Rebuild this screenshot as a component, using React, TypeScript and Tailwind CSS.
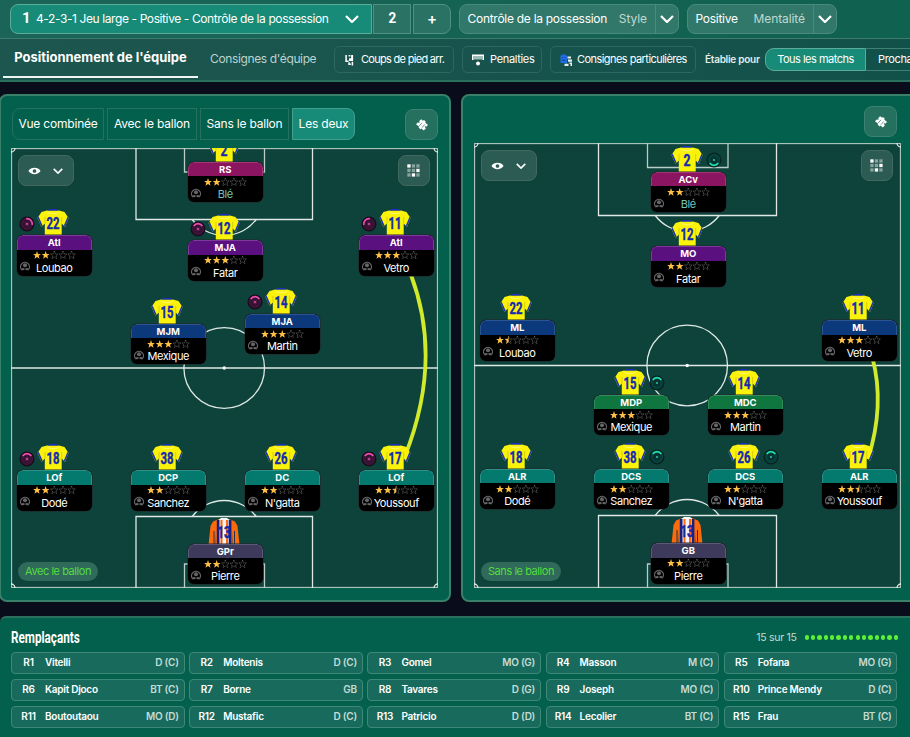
import clsx from "clsx";

type Radar = { side: "left" | "right"; tone: "pink" | "teal"; angle: number };

type Player = {
  x: number;
  y: number;
  num: number;
  role: string;
  name: string;
  stars: number;
  tone: keyof typeof tones;
  radar?: Radar;
  keeper?: boolean;
  highlight?: boolean;
};

const tones = {
  pink: "bg-[#8b1560] border-[#a13677]",
  purple: "bg-[#5b1080] border-[#7d3a9c]",
  blue: "bg-[#0c397c] border-[#2c5492]",
  teal: "bg-[#04796d] border-[#2c9287]",
  green: "bg-[#0f763f] border-[#338d5d]",
  slate: "bg-[#3e3a5b] border-[#5c5877]",
};

const pinkUp: Radar = { side: "left", tone: "pink", angle: 0 };
const tealUp: Radar = { side: "right", tone: "teal", angle: 0 };

// x / y : coin haut gauche de la carte, dans le repère du terrain
const withBall: Player[] = [
  { x: 177, y: 13.5, num: 2, role: "RS", name: "Blé", stars: 2, tone: "pink", highlight: true },
  { x: 6, y: 87, num: 22, role: "Atl", name: "Loubao", stars: 2, tone: "purple", radar: { ...pinkUp, angle: 45 } },
  { x: 177, y: 92, num: 12, role: "MJA", name: "Fatar", stars: 3, tone: "purple", radar: pinkUp },
  { x: 348, y: 87, num: 11, role: "Atl", name: "Vetro", stars: 3, tone: "purple", radar: { ...pinkUp, angle: -45 } },
  { x: 120, y: 175.5, num: 15, role: "MJM", name: "Mexique", stars: 3, tone: "blue" },
  { x: 234, y: 165.5, num: 14, role: "MJA", name: "Martin", stars: 3, tone: "blue", radar: pinkUp },
  { x: 6, y: 322, num: 18, role: "LOf", name: "Dodé", stars: 2, tone: "teal", radar: pinkUp },
  { x: 120, y: 322, num: 38, role: "DCP", name: "Sanchez", stars: 2, tone: "teal" },
  { x: 234, y: 322, num: 26, role: "DC", name: "N'gatta", stars: 2, tone: "teal" },
  { x: 348, y: 322, num: 17, role: "LOf", name: "Youssouf", stars: 2.5, tone: "teal", radar: pinkUp },
  { x: 177, y: 395.5, num: 13, role: "GPr", name: "Pierre", stars: 2, tone: "slate", keeper: true },
];

const withoutBall: Player[] = [
  { x: 177, y: 28.5, num: 2, role: "ACv", name: "Blé", stars: 2, tone: "pink", highlight: true, radar: { ...tealUp, angle: 180 } },
  { x: 177, y: 103, num: 12, role: "MO", name: "Fatar", stars: 2, tone: "purple" },
  { x: 6, y: 177, num: 22, role: "ML", name: "Loubao", stars: 1.5, tone: "blue" },
  { x: 348, y: 177, num: 11, role: "ML", name: "Vetro", stars: 3, tone: "blue" },
  { x: 120, y: 251.5, num: 15, role: "MDP", name: "Mexique", stars: 3, tone: "green", radar: tealUp },
  { x: 234, y: 251.5, num: 14, role: "MDC", name: "Martin", stars: 3, tone: "green" },
  { x: 6, y: 325.5, num: 18, role: "ALR", name: "Dodé", stars: 2, tone: "teal" },
  { x: 120, y: 325.5, num: 38, role: "DCS", name: "Sanchez", stars: 2, tone: "teal", radar: tealUp },
  { x: 234, y: 325.5, num: 26, role: "DCS", name: "N'gatta", stars: 2, tone: "teal", radar: tealUp },
  { x: 348, y: 325.5, num: 17, role: "ALR", name: "Youssouf", stars: 2.5, tone: "teal" },
  { x: 177, y: 400, num: 13, role: "GB", name: "Pierre", stars: 2, tone: "slate", keeper: true },
];

const subs: [string, string][] = [
  ["Vitelli", "D (C)"],
  ["Moltenis", "D (C)"],
  ["Gomel", "MO (G)"],
  ["Masson", "M (C)"],
  ["Fofana", "MO (G)"],
  ["Kapit Djoco", "BT (C)"],
  ["Borne", "GB"],
  ["Tavares", "D (G)"],
  ["Joseph", "MO (C)"],
  ["Prince Mendy", "D (C)"],
  ["Boutoutaou", "MO (D)"],
  ["Mustafic", "D (C)"],
  ["Patricio", "D (D)"],
  ["Lecolier", "BT (C)"],
  ["Frau", "BT (C)"],
];

function Chevron({ className }: { className?: string }) {
  return (
    <svg viewBox="0 0 14 8" className={className} fill="none" stroke="white" aria-hidden>
      <path d="M1 1l6 6 6-6" strokeWidth="2.2" />
    </svg>
  );
}

function Shirt({ num, keeper }: { num: number; keeper?: boolean }) {
  return (
    <svg viewBox="0 0 32 28" className="block h-7 w-8" aria-hidden>
      {keeper ? (
        <>
          <path d="M11 2 5 4.500 2.500 9 0.500 28H7.500L8 15V28H24.500V15L25 28H31.500L29.500 9 27 4.500 21 2Z" fill="#fb6a0b" />
          <path d="M11 2h10v26H11z" fill="#f4f2f6" />
          <path d="M8.800 3h2.700v25H8.800zM20.700 3h2.700v25h-2.700z" fill="#1b1f7c" />
          <path d="M12.500 3h2v25h-2zM18 3h2v25h-2z" fill="#fb6a0b" />
          <path d="M6 14v14M26.500 14v14" stroke="#26304a" strokeWidth="1" />
          <path d="M12 1h8l-1.500 2h-5z" fill="#fff" />
        </>
      ) : (
        <>
          <path d="M10 2.500 4.500 4 0.500 10 4.500 19 7.800 15.500V28H24.700V15.500L28 19 31.500 10 27.500 4 22 2.500Z" fill="#fbf20c" />
          <path d="M0.500 10 4.500 19 5.700 17.700 1.600 8.500ZM31.500 10 28 19 26.800 17.700 30.600 8.500Z" fill="#1b35a8" />
          <path d="M12 1h8l1.500 1.500H10.500z" fill="#1b2fc0" />
          <path d="M8 15.500V9M24.700 15.500V9" stroke="#cfc400" strokeWidth="0.800" />
          <path d="M10.500 4.500C13 6 19 6 21.500 4.500" fill="none" stroke="#fdf98a" strokeWidth="0.800" />
        </>
      )}
      <text
        x="16"
        y="21"
        textAnchor="middle"
        textLength={num > 9 ? 13 : 7}
        lengthAdjust="spacingAndGlyphs"
        fontFamily="Roboto, sans-serif"
        fontSize="16"
        fontWeight="700"
        fill="#1429b0"
        stroke="#1429b0"
        strokeWidth="0.400"
      >
        {num}
      </text>
    </svg>
  );
}

function Stars({ value }: { value: number }) {
  const star = "M4 0.100 5 2.900 7.900 3 5.700 4.800 6.500 7.700 4 6 1.500 7.700 2.300 4.800 0.100 3 3 2.900Z";
  const half = "M4 0.100V6L1.500 7.700 2.300 4.800 0.100 3 3 2.900Z";
  return (
    <svg viewBox="0 0 43 8" className="h-2 w-[43px]" aria-hidden>
      {[0, 1, 2, 3, 4].map((i) => (
        <g key={i} transform={`translate(${i * 8.65} 0)`}>
          {value >= i + 1 ? (
            <path d={star} fill="#ffc045" />
          ) : (
            <>
              <path d={star} fill="none" stroke="#858585" strokeWidth="0.600" strokeDasharray="1 0.500" />
              {value > i && <path d={half} fill="#ffc045" />}
            </>
          )}
        </g>
      ))}
    </svg>
  );
}

function RadarIcon({ radar }: { radar: Radar }) {
  const pink = radar.tone === "pink";
  return (
    <svg
      viewBox="0 0 16 16"
      className={clsx("absolute -top-[19.500px] size-4", radar.side === "left" ? "left-[2px]" : "left-[55px]")}
      aria-hidden
    >
      <circle cx="8" cy="8" r="6.900" fill={pink ? "#3b1436" : "#07403c"} stroke={pink ? "#180c1c" : "#06231f"} strokeWidth="1.300" />
      <circle cx="8" cy="8" r="3" fill={pink ? "#4d1a45" : "#0a3634"} stroke={pink ? "#2a0f28" : "#052c2a"} strokeWidth="0.800" />
      <circle cx="8" cy="8" r="0.900" fill={pink ? "#f04fb4" : "#21e0b2"} />
      <path
        d="M3.700 4.900A5.300 5.300 0 0 1 12.300 4.900"
        transform={`rotate(${radar.angle} 8 8)`}
        fill="none"
        stroke={pink ? "#f04fb4" : "#21e0b2"}
        strokeWidth="1.700"
      />
    </svg>
  );
}

function PlayerCard({ p }: { p: Player }) {
  return (
    <div className="absolute w-[74.500px]" style={{ left: p.x, top: p.y }}>
      <div className="absolute -top-[27px] left-[20px]">
        <Shirt num={p.num} keeper={p.keeper} />
      </div>
      {p.radar && <RadarIcon radar={p.radar} />}
      <div className="relative h-[40.500px] overflow-hidden rounded-md bg-black shadow-[0_0_0_0.500px_#24252b]">
        <div
          className={clsx(
            "flex h-[14.500px] items-center justify-center rounded-t-md border border-b-0 text-[9.500px] leading-none font-bold text-white",
            tones[p.tone],
          )}
        >
          {p.role}
        </div>
        <div className="flex justify-center pt-[1.500px]">
          <Stars value={p.stars} />
        </div>
        <div
          className={clsx(
            "pt-[2.500px] text-center text-[11px] leading-[13px] tracking-[-0.420px]",
            p.highlight ? "text-[#74c5bb]" : "text-white",
          )}
        >
          {p.name}
        </div>
        <svg viewBox="0 0 10 10" className="absolute bottom-[4.500px] left-[3px] size-[10px]" aria-hidden>
          <path d="M1.300 8.200A4.400 4.400 0 1 1 8.700 8.200" fill="none" stroke="#66666a" strokeWidth="1.100" />
          <circle cx="5" cy="4.200" r="2" fill="#66666a" />
          <path d="M0.800 9.300C1.300 6.800 3.500 6.500 5 8 6.500 6.500 8.700 6.800 9.200 9.300H6.800L5 8.300 3.200 9.300Z" fill="#66666a" />
        </svg>
      </div>
    </div>
  );
}

type PitchProps = {
  height: number;
  mid: number;
  boxX: [number, number];
  goalX: [number, number];
  boxY: [number, number];
  goalY: [number, number];
  link: string;
};

function PitchLines({ height, mid, boxX, goalX, boxY, goalY, link }: PitchProps) {
  const cx = 213.2;
  return (
    <svg viewBox={`0 0 427 ${height}`} width="427" height={height} fill="none" className="absolute inset-0" aria-hidden>
      <g stroke="#dfe9e6" strokeWidth="1.300">
        <rect x="0.500" y="0.500" width="426" height={height - 1} stroke="#a9c2bb" />
        <path d={`M0 ${mid}H427`} strokeWidth="1.700" />
        <circle cx={cx} cy={mid} r="40.300" />
        <path d={`M${boxX[0]} 0V${boxY[0]}H${boxX[1]}V0`} />
        <path d={`M${boxX[0]} ${height}V${boxY[1]}H${boxX[1]}V${height}`} />
        <path d={`M${goalX[0]} 0V${goalY[0]}H${goalX[1]}V0`} stroke="#b9ccc7" />
        <path d={`M${goalX[0]} ${height}V${goalY[1]}H${goalX[1]}V${height}`} stroke="#b9ccc7" />
        <path d={`M${cx - 32} ${boxY[0]}A40 40 0 0 0 ${cx + 32} ${boxY[0]}`} />
        <path d={`M${cx - 32} ${boxY[1]}A40 40 0 0 1 ${cx + 32} ${boxY[1]}`} />
        <path d={`M0 4A4 4 0 0 0 4 0M423 0A4 4 0 0 0 427 4M0 ${height - 4}A4 4 0 0 1 4 ${height}M423 ${height}A4 4 0 0 1 427 ${height - 4}`} />
      </g>
      <circle cx={cx} cy={mid} r="1.700" fill="#fff" />
      <path d={link} stroke="#d2ea2c" strokeWidth="3.800" />
    </svg>
  );
}

function Pitch({ players, label, ...lines }: PitchProps & { players: Player[]; label: string }) {
  return (
    <div className="relative w-[427px] overflow-hidden bg-[#0e433b]" style={{ height: lines.height }}>
      <PitchLines {...lines} />
      {players.map((p) => (
        <PlayerCard key={p.name} p={p} />
      ))}
      <button className="absolute top-[7px] left-[7px] flex h-[31px] w-[56px] items-center justify-center gap-[12px] rounded-lg border border-[#41695f] bg-[#2c5b53] pr-[2px]">
        <svg viewBox="0 0 14 8" className="h-2 w-[13px]" aria-hidden>
          <path d="M0.500 4C3-0.500 11-0.500 13.500 4 11 8.500 3 8.500 0.500 4Z" fill="#fff" />
          <circle cx="7" cy="4" r="2" fill="#2c5b53" />
        </svg>
        <Chevron className="h-[6px] w-[10px]" />
      </button>
      <button className="absolute top-[7px] right-[8px] flex h-[31px] w-[32px] items-center justify-center rounded-lg border border-[#41695f] bg-[#2c5b53]">
        <svg viewBox="0 0 13 13" className="mr-px size-[13px]" aria-hidden>
          {Array.from({ length: 9 }, (_, i) => (
            <rect
              key={i}
              x={(i % 3) * 4.5 + 0.3}
              y={Math.floor(i / 3) * 4.5 + 0.3}
              width="3.300"
              height="3.300"
              fill={[0, 5, 7].includes(i) ? "#fff" : "#86a39d"}
            />
          ))}
        </svg>
      </button>
      <span className="absolute bottom-[7px] left-[7px] flex h-[19px] w-[80px] items-center justify-center rounded-full bg-[#2f6a5a] text-[11px] tracking-[-0.450px] text-[#54dd40]">
        {label}
      </span>
    </div>
  );
}

function BrushButton() {
  return (
    <button className="flex h-[31px] w-[33px] items-center justify-center rounded-lg border border-[#3b8272] bg-[#25705f]">
      <svg viewBox="0 0 14 14" className="size-[14px]" aria-hidden>
        <path
          d="M6.200 1.200 8 2.800 9 2 10.800 3.700 10.200 4.500 13 7 11.200 8.700 10.500 8 9.700 9 11 10.200 8.800 12.600 6.500 10.600 5.600 11.400 3.600 9.600 4.200 8.800 1 6.300 3 4.200 4 5 4.900 4 4 3.200Z"
          fill="#fff"
        />
        <path d="M4.200 8 7 4.800M7 9.600 9.800 6.400" stroke="#25705f" strokeWidth="0.700" />
      </svg>
    </button>
  );
}

function Select({ value, hint, className }: { value: string; hint: string; className: string }) {
  return (
    <div className={clsx("flex h-[30px] items-center rounded-lg border border-[#4a8a7c] bg-[#32786a] pl-[7.500px] text-[12px] tracking-[-0.280px]", className)}>
      <span className="whitespace-nowrap text-white">{value}</span>
      <span className="mr-[8px] ml-auto tracking-[-0.080px] text-[#c0d8d2]">{hint}</span>
      <span className="flex h-full w-[23px] items-center justify-center border-l border-[#4a8a7c]">
        <Chevron className="h-[8px] w-[14px]" />
      </span>
    </div>
  );
}

const toolButton =
  "flex h-[27px] items-center rounded-[5px] border border-[#2c6860] text-[11px] whitespace-nowrap text-white";
const viewTab = "flex h-8 items-center justify-center border whitespace-nowrap";

export default function App() {
  return (
    <div className="flex h-[737px] w-[910px] flex-col overflow-hidden bg-[#090c1b] font-[Inter,sans-serif] text-white">
      <header className="h-[82px] shrink-0 border-b-2 border-[#2b705d]">
        <div className="flex h-[39px] items-start border-b border-[#3b7c6f] bg-linear-to-r from-[#1b6558] to-[#0f6150] pt-1 pl-[10px]">
          <div className="flex h-[30px] w-[362px] items-center rounded-l-lg border border-[#5cab9b] bg-[#178b77] pl-[11px]">
            <span className="w-[14px] pb-[2px] font-[Roboto] text-[15px] font-bold">1</span>
            <span className="text-[12px] tracking-[-0.400px] whitespace-nowrap">4-2-3-1 Jeu large - Positive - Contrôle de la possession</span>
            <Chevron className="mr-[12px] ml-auto h-[8px] w-[14px]" />
          </div>
          <div className="ml-px flex h-[30px] w-[38px] items-center justify-center border border-[#4f9182] bg-[#2a7364] font-[Roboto] text-[15px] font-bold">
            <span className="scale-x-90 pb-[2px]">2</span>
          </div>
          <div className="ml-[2px] flex h-[30px] w-[38px] items-center justify-center rounded-r-lg border border-[#4f9182] bg-[#2a7364] text-[15px] font-semibold">+</div>
          <Select value="Contrôle de la possession" hint="Style" className="ml-2 w-[220px]" />
          <Select value="Positive" hint="Mentalité" className="ml-2 w-[150px]" />
        </div>
        <div className="flex h-[41px] items-center bg-linear-to-r from-[#1d564f] to-[#12514a]">
          <div className="ml-[3px] flex h-full w-[195px] shrink-0 flex-col items-center">
            <span className="mt-[9px] h-[28px] text-[13px] font-bold tracking-[-0.020px] whitespace-nowrap">Positionnement de l'équipe</span>
            <span className="h-[2px] w-full bg-[#eef5f3]" />
          </div>
          <span className="ml-3 w-[124px] shrink-0 pb-px text-[12px] tracking-[-0.370px] whitespace-nowrap text-[#bdd3cf]">Consignes d'équipe</span>
          <button className={clsx(toolButton, "w-[120px] shrink-0 pl-[10px] tracking-[-0.700px]")}>
            <svg viewBox="0 0 10 12" className="mr-[7px] h-3 w-[9px] shrink-0" aria-hidden>
              <path d="M1.200 0.500V7.500H4M4.500 8.500V10.700H6.500M8.200 12V8" fill="none" stroke="#fff" strokeWidth="1.700" />
              <path d="M4 0.500h2v1.500H4zM6.800 0.500h2.200v4H6.800zM4.500 4h4.500v3H4.500z" fill="#fff" />
            </svg>
            Coups de pied arr.
          </button>
          <button className={clsx(toolButton, "ml-2 w-[80px] shrink-0 pl-[9px] tracking-[-0.330px]")}>
            <svg viewBox="0 0 12 12" className="mr-[6px] size-3 shrink-0" aria-hidden>
              <path d="M0.800 6V1.200H11.200V6" fill="none" stroke="#fff" strokeWidth="1.600" />
              <path d="M2 2h8v3.500H2z" fill="#9dbcb7" />
              <circle cx="6" cy="9.500" r="2" fill="#fff" />
            </svg>
            Penalties
          </button>
          <button className={clsx(toolButton, "ml-2 w-[146px] shrink-0 pl-[9px] tracking-[-0.550px]")}>
            <svg viewBox="0 0 12 12" className="mr-[5px] size-3 shrink-0" aria-hidden>
              <path d="M7.500 2.500h3.500v2H7.500zM8 5.500h4v2.300H8zM9.500 8.500h2.500V12h-1.500V10h-1zM4.500 9.800h4V12h-4z" fill="#e9f3f1" />
              <path d="M0.500 1.500H2V0.500H5.500V1.500H7V9H0.500Z" fill="#1d6fe8" />
              <path d="M2 3.500h1M4.500 3.500h1M2 6.200h3.500" stroke="#0c3f9b" />
            </svg>
            Consignes particulières
          </button>
          <span className="ml-[9px] w-[60px] shrink-0 text-[10px] font-semibold tracking-[-0.250px] whitespace-nowrap text-[#e3eeec]">Établie pour</span>
          <div className="flex h-[23px] w-[101px] shrink-0 items-center justify-center rounded-l-[9px] border border-[#5cab9b] bg-[#178b77] text-[11px] tracking-[-0.500px] whitespace-nowrap">
            Tous les matchs
          </div>
          <div className="flex h-[23px] w-[110px] shrink-0 items-center border-y border-[#3f8074] pl-3 text-[11px] tracking-[-0.350px] whitespace-nowrap">Prochain match</div>
        </div>
      </header>

      <main className="mt-[12px] flex h-[508px] shrink-0">
        <section className="-ml-px flex w-[451.500px] shrink-0 flex-col rounded-lg border-2 border-[#388067] bg-[#03604c] pt-3 pl-[10px]">
          <div className="flex h-[40px] items-start pl-px">
            <div className="flex gap-[3px] text-[12px] tracking-[-0.200px]">
              <span className={clsx(viewTab, "w-[92px] rounded-l-lg border-[#26705f]")}>Vue combinée</span>
              <span className={clsx(viewTab, "w-[90px] border-[#26705f]")}>Avec le ballon</span>
              <span className={clsx(viewTab, "w-[89px] border-[#26705f]")}>Sans le ballon</span>
              <span className={clsx(viewTab, "w-[63px] rounded-r-lg border-[#44a08e] bg-[#178b77]")}>Les deux</span>
            </div>
            <div className="mt-px ml-[50px]">
              <BrushButton />
            </div>
          </div>
          <Pitch
            players={withBall}
            label="Avec le ballon"
            height={440}
            mid={220}
            boxX={[125, 301.5]}
            goalX={[173.5, 253.5]}
            boxY={[71.5, 368.5]}
            goalY={[24, 416]}
            link="M400 127Q432 212 394 308"
          />
        </section>
        <section className="ml-[10.500px] flex w-[470px] shrink-0 flex-col rounded-lg border-2 border-[#388067] bg-[#03604c] pt-[10px] pl-[11px]">
          <div className="flex h-[37px] justify-start pl-[390px]">
            <BrushButton />
          </div>
          <Pitch
            players={withoutBall}
            label="Sans le ballon"
            height={445}
            mid={222.5}
            boxX={[124.5, 302.5]}
            goalX={[173.5, 254]}
            boxY={[72.5, 372.5]}
            goalY={[24.5, 421]}
            link="M398.500 215Q411 262 394 316"
          />
        </section>
      </main>

      <section className="mt-[14px] -mr-2 h-[130px] shrink-0 rounded-l-md border-t-2 border-[#2b705d] bg-[#03604c] pl-[11px]">
        <div className="flex h-[34px] w-[887px] items-center justify-between pt-[5px]">
          <h2 className="w-[69px] origin-left scale-x-[0.730] font-[Roboto] text-[16px] font-bold whitespace-nowrap">Remplaçants</h2>
          <div className="flex items-center gap-2 text-[10.500px] tracking-[-0.300px] text-[#c5dbd5]">
            15 sur 15
            <div className="flex gap-[2.200px]">
              {Array.from({ length: 15 }, (_, i) => (
                <i key={i} className="size-[4.200px] rounded-full bg-[#5df037]" />
              ))}
            </div>
          </div>
        </div>
        <div className="grid w-[886.500px] grid-cols-5 gap-x-[4.500px] gap-y-[5px]">
          {subs.map(([name, pos], i) => (
            <div
              key={name}
              className="flex h-[22px] items-center rounded-[4px] border border-[#3e8878] bg-[#186b5c] pr-[5px] pb-px text-[10px] font-semibold tracking-[-0.200px]"
            >
              <span className="w-[33px] text-center">R{i + 1}</span>
              <span className="tracking-[-0.250px]">{name}</span>
              <span className="ml-auto tracking-[-0.250px] text-[#c5dbd5]">{pos}</span>
            </div>
          ))}
        </div>
      </section>
    </div>
  );
}
